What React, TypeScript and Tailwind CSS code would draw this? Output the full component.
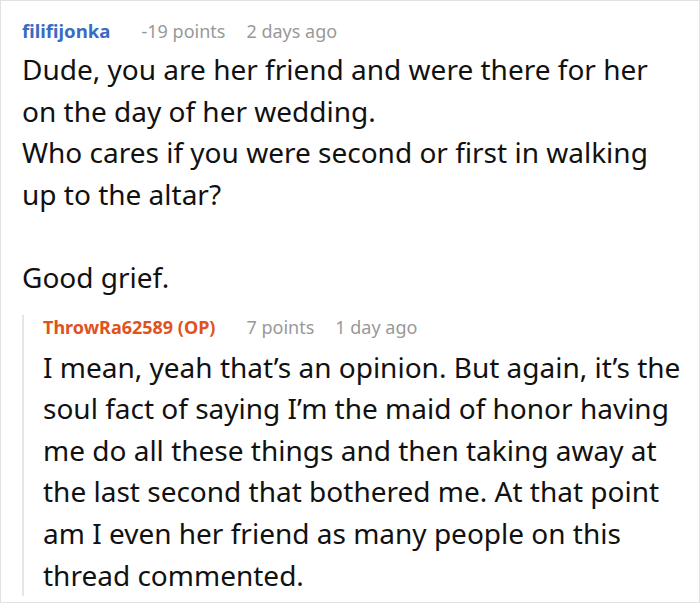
const Header = ({
  name,
  nameClass,
  points,
  when,
}: {
  name: string;
  nameClass: string;
  points: string;
  when: string;
}) => {
  return (
    <div className="flex items-baseline text-[18px] leading-[24px]">
      <span className={`font-bold ${nameClass}`}>{name}</span>
      <span className="ml-[31px] text-[#999]">{points}</span>
      <span className="ml-[21px] text-[#999]">{when}</span>
    </div>
  );
};

export default function App() {
  return (
    <div
      className="h-[604px] w-[700px] overflow-hidden bg-white"
      style={{ fontFamily: '"Noto Sans", "Open Sans", sans-serif' }}
    >
      <div className="h-[603px] border border-[#e2e2e2] pl-[21px] pt-[18px] text-[#111]">
        <Header
          name="filifijonka"
          nameClass="text-[18.6px] text-[#3a6bc2]"
          points="-19 points"
          when="2 days ago"
        />
        <div className="mt-[6px] text-[28px] leading-[41.6px]">
          <p>Dude, you are her friend and were there for her</p>
          <p>on the day of her wedding.</p>
          <p>Who cares if you were second or first in walking</p>
          <p>up to the altar?</p>
          <p>&nbsp;</p>
          <p>Good grief.</p>
        </div>
        <div className="mt-[16px] border-l-2 border-[#e6e6e6] pl-[19px]">
          <Header
            name="ThrowRa62589 (OP)"
            nameClass="text-[#e0531c]"
            points="7 points"
            when="1 day ago"
          />
          <div className="mt-[8px] text-[28px] leading-[41.6px]">
            <p>I mean, yeah that’s an opinion. But again, it’s the</p>
            <p>soul fact of saying I’m the maid of honor having</p>
            <p>me do all these things and then taking away at</p>
            <p>the last second that bothered me. At that point</p>
            <p>am I even her friend as many people on this</p>
            <p>thread commented.</p>
          </div>
        </div>
      </div>
    </div>
  );
}
